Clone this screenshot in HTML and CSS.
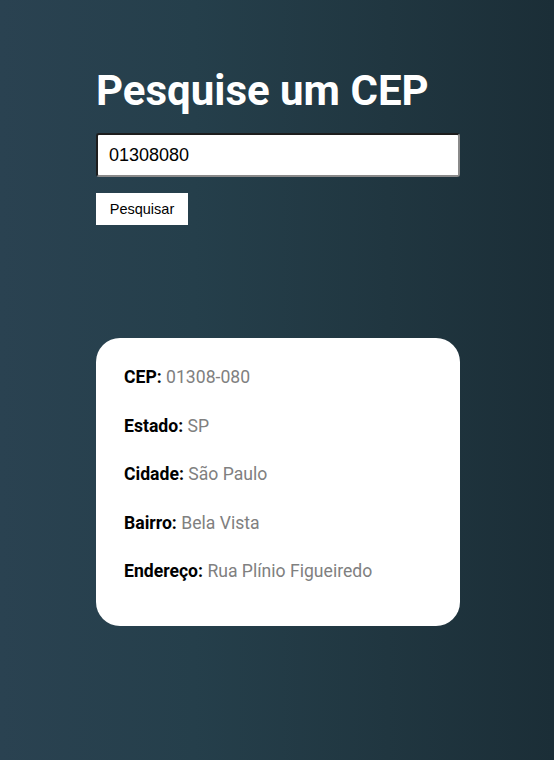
FILE: index.html
```html
<!DOCTYPE html>
<html lang="pt-BR">
<head>
<meta charset="utf-8">
<title>Pesquise um CEP</title>
<link rel="stylesheet" href="styles.css">
</head>
<body>
<main class="page">
  <h1 class="title">Pesquise um CEP</h1>
  <input class="cep-input" type="text" value="01308080">
  <button class="search-btn" type="button">Pesquisar</button>
  <section class="result">
    <p class="row"><span class="label">CEP:</span> <span class="value">01308-080</span></p>
    <p class="row"><span class="label">Estado:</span> <span class="value">SP</span></p>
    <p class="row"><span class="label">Cidade:</span> <span class="value">São Paulo</span></p>
    <p class="row"><span class="label">Bairro:</span> <span class="value">Bela Vista</span></p>
    <p class="row"><span class="label">Endereço:</span> <span class="value">Rua Plínio Figueiredo</span></p>
  </section>
</main>
</body>
</html>
```
FILE: styles.css
```css
html, body {
  margin: 0;
  height: 100%;
}
body {
  background: linear-gradient(90deg, #2a4251 0%, #253f4b 35%, #203640 70%, #1b2e37 100%);
  font-family: Roboto, "Liberation Sans", Arial, sans-serif;
}
.page {
  width: 364px;
  margin-left: 96px;
  padding-top: 66px;
  display: flex;
  flex-direction: column;
  align-items: flex-start;
}
.title {
  margin: 0;
  font-family: Roboto, sans-serif;
  font-weight: 700;
  font-size: 42px;
  line-height: 49px;
  color: #ffffff;
}
.cep-input {
  box-sizing: border-box;
  margin-top: 18px;
  width: 364px;
  height: 44px;
  padding: 0 11px;
  border: 2px solid;
  border-color: #1d1d1d #8a8a8a #8a8a8a #1d1d1d;
  border-radius: 3px;
  background: #ffffff;
  font-family: "Liberation Sans", Arial, sans-serif;
  font-size: 18px;
  color: #000000;
  outline: none;
}
.search-btn {
  margin-top: 16px;
  width: 92px;
  height: 32px;
  padding: 0;
  border: none;
  border-radius: 0;
  background: #ffffff;
  font-family: "Liberation Sans", Arial, sans-serif;
  font-size: 14.5px;
  color: #000000;
}
.result {
  box-sizing: border-box;
  margin-top: 113px;
  width: 364px;
  height: 288px;
  padding: 27px 28px 0;
  background: #ffffff;
  border-radius: 24px;
  display: flex;
  flex-direction: column;
  gap: 24.5px;
}
.row {
  margin: 0;
  font-size: 17.6px;
  line-height: 24px;
}
.label {
  font-weight: 700;
  color: #000000;
}
.value {
  color: #808080;
}
```
